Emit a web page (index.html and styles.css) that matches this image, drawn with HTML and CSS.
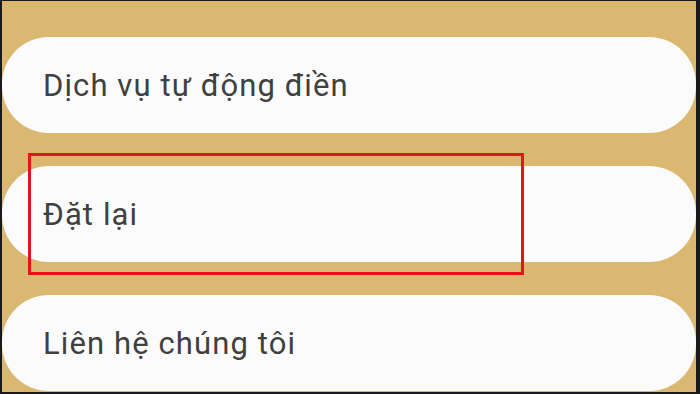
FILE: index.html
```html
<!DOCTYPE html>
<html lang="vi">
<head>
<meta charset="utf-8">
<title>Cài đặt</title>
<link rel="stylesheet" href="styles.css">
</head>
<body>
<div class="frame">
  <div class="list">
    <div class="item">Dịch vụ tự động điền</div>
    <div class="item">Đặt lại</div>
    <div class="item">Liên hệ chúng tôi</div>
  </div>
  <div class="highlight"></div>
</div>
</body>
</html>
```
FILE: styles.css
```css
html, body {
  margin: 0;
  padding: 0;
  width: 700px;
  height: 394px;
  overflow: hidden;
  background: #1a1a1a;
}
.frame {
  position: relative;
  box-sizing: border-box;
  margin: 1px 4px 2px 2px;
  height: 391px;
  background: #dab872;
  overflow: hidden;
}
.list {
  display: flex;
  flex-direction: column;
  gap: 33px;
  padding-top: 36px;
}
.item {
  box-sizing: border-box;
  height: 96px;
  border-radius: 47px;
  background: #fbfbfb;
  display: flex;
  align-items: center;
  padding-left: 41px;
  font-family: Roboto, "Noto Sans", sans-serif;
  font-size: 31px;
  color: #404040;
  letter-spacing: 1.1px;
}
.highlight {
  position: absolute;
  left: 26px;
  top: 152px;
  width: 496px;
  height: 122px;
  box-sizing: border-box;
  border: 3px solid #e3151a;
}
```
